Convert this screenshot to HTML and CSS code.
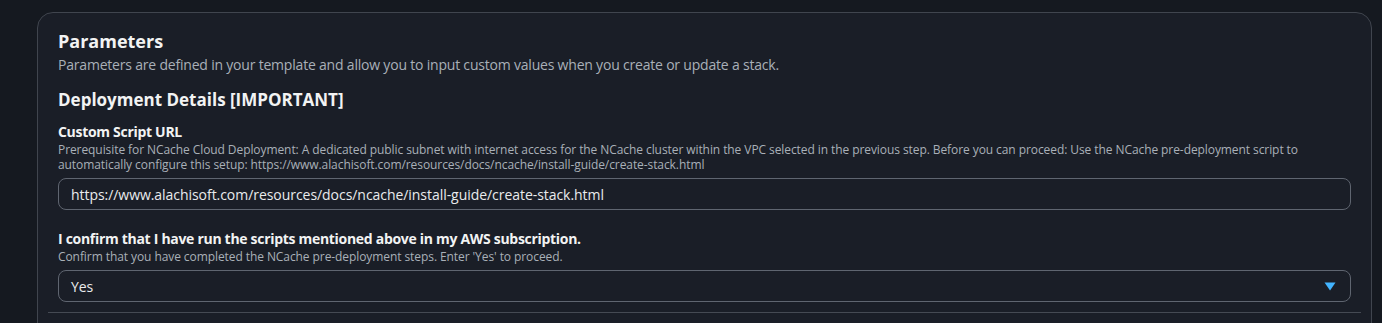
FILE: index.html
```html
<!DOCTYPE html>
<html lang="en">
<head>
<meta charset="utf-8">
<title>Parameters</title>
<link rel="stylesheet" href="styles.css">
</head>
<body>
<div class="page">
  <section class="card">
    <div class="card-body">
      <h2 class="title">Parameters</h2>
      <p class="desc">Parameters are defined in your template and allow you to input custom values when you create or update a stack.</p>
      <h3 class="group">Deployment Details [IMPORTANT]</h3>

      <div class="field">
        <label class="label">Custom Script URL</label>
        <div class="hint">Prerequisite for NCache Cloud Deployment: A dedicated public subnet with internet access for the NCache cluster within the VPC selected in the previous step. Before you can proceed: Use the NCache pre-deployment script to automatically configure this setup: https://www.alachisoft.com/resources/docs/ncache/install-guide/create-stack.html</div>
        <div class="input">https://www.alachisoft.com/resources/docs/ncache/install-guide/create-stack.html</div>
      </div>

      <div class="field field-2">
        <label class="label">I confirm that I have run the scripts mentioned above in my AWS subscription.</label>
        <div class="hint">Confirm that you have completed the NCache pre-deployment steps. Enter 'Yes' to proceed.</div>
        <div class="input select">
          <span>Yes</span>
          <svg class="caret" width="12" height="9" viewBox="0 0 12 9"><path d="M0.5 0.5 H11.5 L6 8.5 Z" fill="#42b4ff"/></svg>
        </div>
      </div>
    </div>
    <div class="divider"></div>
  </section>
</div>
</body>
</html>
```
FILE: styles.css
```css
html, body {
  margin: 0;
  padding: 0;
  background: #151920;
  height: 100%;
  overflow: hidden;
}
body {
  font-family: "Open Sans", "Noto Sans", Arial, sans-serif;
  color: #e9ebed;
}
.page {
  padding: 12px 10px 0 37px;
}
.card {
  background: #1a1e27;
  border: 1px solid #40454e;
  border-radius: 16px;
  height: 400px;
  box-sizing: border-box;
}
.card-body {
  padding: 16px 20px 10px 20px;
}
.title {
  margin: 0;
  font-size: 18px;
  line-height: 24px;
  font-weight: 700;
  color: #f2f3f3;
}
.desc {
  margin: 2px 0 0;
  font-size: 14px;
  line-height: 20px;
  letter-spacing: -0.2px;
  color: #a9b0b8;
}
.group {
  margin: 14px 0 0;
  font-size: 17px;
  line-height: 22px;
  font-weight: 700;
  color: #f2f3f3;
}
.field {
  margin-top: 12px;
}
.field-2 {
  margin-top: 20px;
}
.label {
  display: block;
  font-size: 14px;
  line-height: 18px;
  font-weight: 700;
  letter-spacing: -0.3px;
  color: #f2f3f3;
}
.hint {
  font-size: 12px;
  line-height: 15px;
  letter-spacing: -0.08px;
  color: #a9b0b8;
  margin-top: 1px;
}
.input {
  margin-top: 6px;
  height: 32px;
  box-sizing: border-box;
  border: 1px solid #5f6570;
  border-radius: 8px;
  padding: 0 12px;
  display: flex;
  align-items: center;
  font-size: 14px;
  letter-spacing: -0.05px;
  color: #e9ebed;
}
.select {
  justify-content: space-between;
  padding-right: 14px;
}
.caret {
  display: block;
}
.divider {
  margin: 0 10px;
  border-top: 1px solid #454a53;
}
```
